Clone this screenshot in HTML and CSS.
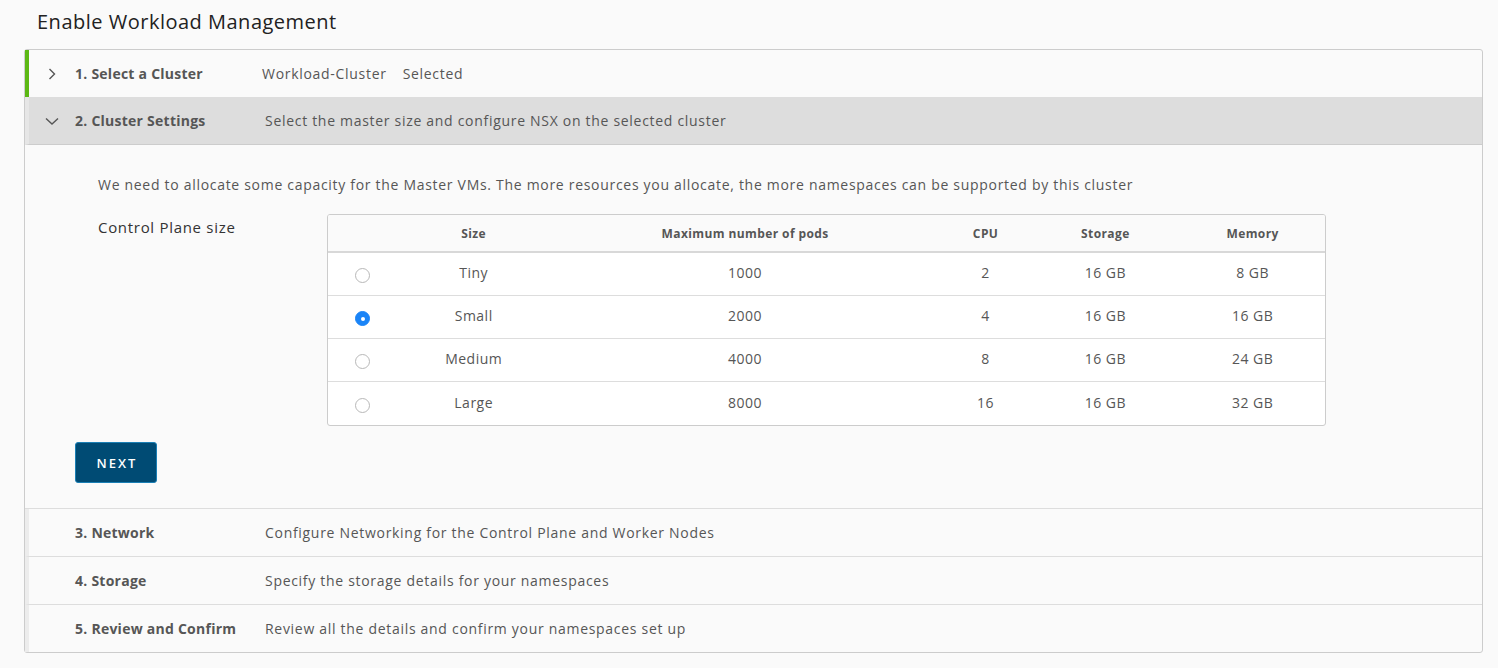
FILE: index.html
```html
<!DOCTYPE html>
<html>
<head>
<meta charset="utf-8">
<link rel="stylesheet" href="styles.css">
</head>
<body>
<h1 class="title">Enable Workload Management</h1>
<div class="wizard">
  <div class="step done">
    <span class="chev"><svg width="12" height="12" viewBox="0 0 12 12"><path d="M3.5 1 L8.5 6 L3.5 11" fill="none" stroke="#565656" stroke-width="1.4"/></svg></span>
    <span class="label">1. Select a Cluster</span>
    <span class="desc done-desc">Workload-Cluster<span class="sel">Selected</span></span>
  </div>
  <div class="step active">
    <span class="chev"><svg width="14" height="12" viewBox="0 0 14 12"><path d="M1 3.5 L7 9 L13 3.5" fill="none" stroke="#565656" stroke-width="1.4"/></svg></span>
    <span class="label">2. Cluster Settings</span>
    <span class="desc">Select the master size and configure NSX on the selected cluster</span>
  </div>
  <div class="content">
    <p class="intro">We need to allocate some capacity for the Master VMs. The more resources you allocate, the more namespaces can be supported by this cluster</p>
    <div class="cp-row">
      <div class="cp-label">Control Plane size</div>
      <table class="grid">
        <thead>
          <tr><th class="c-radio"></th><th class="c-size">Size</th><th class="c-pods">Maximum number of pods</th><th class="c-cpu">CPU</th><th class="c-sto">Storage</th><th class="c-mem">Memory</th></tr>
        </thead>
        <tbody>
          <tr><td class="c-radio"><span class="radio"></span></td><td>Tiny</td><td>1000</td><td>2</td><td>16 GB</td><td>8 GB</td></tr>
          <tr><td class="c-radio"><span class="radio on"></span></td><td>Small</td><td>2000</td><td>4</td><td>16 GB</td><td>16 GB</td></tr>
          <tr><td class="c-radio"><span class="radio"></span></td><td>Medium</td><td>4000</td><td>8</td><td>16 GB</td><td>24 GB</td></tr>
          <tr><td class="c-radio"><span class="radio"></span></td><td>Large</td><td>8000</td><td>16</td><td>16 GB</td><td>32 GB</td></tr>
        </tbody>
      </table>
    </div>
    <button class="btn">NEXT</button>
  </div>
  <div class="step">
    <span class="chev"></span>
    <span class="label">3. Network</span>
    <span class="desc">Configure Networking for the Control Plane and Worker Nodes</span>
  </div>
  <div class="step">
    <span class="chev"></span>
    <span class="label">4. Storage</span>
    <span class="desc">Specify the storage details for your namespaces</span>
  </div>
  <div class="step last">
    <span class="chev"></span>
    <span class="label">5. Review and Confirm</span>
    <span class="desc">Review all the details and confirm your namespaces set up</span>
  </div>
</div>
</body>
</html>
```
FILE: styles.css
```css
* { box-sizing: border-box; }
html, body { margin: 0; padding: 0; background: #fafafa; }
body {
  font-family: "Open Sans", "Noto Sans", sans-serif;
  color: #565656;
  width: 1498px;
  height: 668px;
  overflow: hidden;
}
.title {
  margin: 0;
  height: 49px;
  padding: 9px 0 0 37px;
  font-size: 20px;
  font-weight: 400;
  line-height: 26px;
  letter-spacing: 0.5px;
  color: #222;
}
.wizard {
  margin-left: 24px;
  width: 1459px;
  border: 1px solid #ccc;
  border-radius: 3px;
  background: #fafafa;
}
.step {
  display: flex;
  align-items: center;
  height: 48px;
  border-bottom: 1px solid #ddd;
  border-left: 4px solid #ececec;
  font-size: 14px;
}
.step.last { border-bottom: none; height: 47px; }
.step.done { border-left-color: #5cb814; border-bottom: none; height: 47px; }
.step.active { background: #dddddd; border-left-color: #e6e6e6; border-bottom: 1px solid #cccccc; }
.chev {
  width: 24px;
  margin-left: 11px;
  margin-right: 11px;
  display: flex;
  justify-content: center;
}
.label {
  width: 190px;
  font-weight: 700;
  letter-spacing: 0.25px;
  color: #565656;
}
.desc { letter-spacing: 0.7px; }
.done-desc { margin-left: -3px; }
.sel { margin-left: 16px; }
.content {
  padding: 30px 0 25px 50px;
  border-bottom: 1px solid #ddd;
}
.intro {
  margin: 0 0 19px 23px;
  font-size: 14px;
  line-height: 20px;
  letter-spacing: 0.7px;
  color: #565656;
}
.cp-row {
  display: flex;
  margin-left: 23px;
}
.cp-label {
  width: 229px;
  font-size: 15px;
  letter-spacing: 0.7px;
  color: #333;
  padding-top: 3px;
}
.grid {
  width: 999px;
  border-collapse: separate;
  border-spacing: 0;
  border: 1px solid #ccc;
  border-radius: 3px;
  background: #fff;
  font-size: 14px;
  letter-spacing: 0.5px;
  color: #565656;
  overflow: hidden;
}
.grid th {
  height: 38px;
  background: #fafafa;
  border-bottom: 2px solid #d8d8d8;
  font-size: 12px;
  font-weight: 700;
  letter-spacing: 0.4px;
  color: #565656;
  text-align: center;
  padding: 0;
}
.grid td {
  height: 43px;
  border-bottom: 1px solid #ddd;
  text-align: center;
  padding: 0 0 3px 0;
}
.grid td.c-radio { padding: 0; }
.grid tr:last-child td { border-bottom: none; }
.c-radio { width: 70px; }
.c-size { width: 152px; }
.c-pods { width: 392px; }
.c-cpu { width: 90px; }
.c-sto { width: 150px; }
.c-mem { width: 145px; }
.radio {
  display: inline-block;
  width: 15px;
  height: 15px;
  border-radius: 50%;
  border: 1px solid #b8b8b8;
  background: #fff;
  vertical-align: middle;
  position: relative;
}
.radio.on {
  border-color: #1a84f7;
  background: #1a84f7;
}
.radio.on::after {
  content: "";
  position: absolute;
  left: 4.5px;
  top: 4.5px;
  width: 4px;
  height: 4px;
  border-radius: 50%;
  background: #fff;
}
.btn {
  display: block;
  margin-top: 16px;
  width: 82px;
  height: 41px;
  background: #004b74;
  border: 1px solid #1a7fb5;
  border-radius: 3px;
  color: #fff;
  font-family: "Open Sans", "Noto Sans", sans-serif;
  font-size: 13px;
  font-weight: 600;
  letter-spacing: 2px;
  padding: 0 0 0 2px;
}
```
